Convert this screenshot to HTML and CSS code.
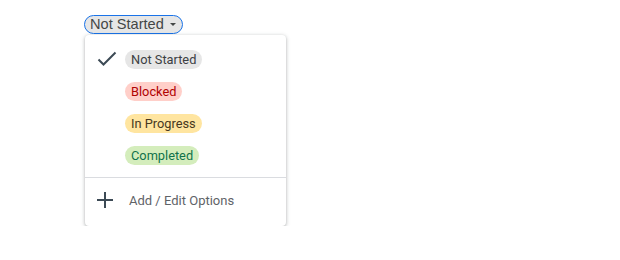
FILE: index.html
```html
<!DOCTYPE html>
<html>
<head>
<meta charset="utf-8">
<link rel="stylesheet" href="styles.css">
</head>
<body>
<div class="page">
  <div class="cell">
    <button class="trigger"><span class="trigger-label">Not Started</span><span class="caret"></span></button>
    <div class="menu">
      <ul class="options">
        <li class="option">
          <span class="icon">
            <svg width="20" height="16" viewBox="0 0 20 16"><path d="M1.5 8.5l5 5L18.5 1.5" fill="none" stroke="#3c4a55" stroke-width="2"/></svg>
          </span>
          <span class="chip chip-grey">Not Started</span>
        </li>
        <li class="option"><span class="icon"></span><span class="chip chip-red">Blocked</span></li>
        <li class="option"><span class="icon"></span><span class="chip chip-yellow">In Progress</span></li>
        <li class="option"><span class="icon"></span><span class="chip chip-green">Completed</span></li>
      </ul>
      <div class="divider"></div>
      <div class="add">
        <span class="icon">
          <svg width="18" height="16" viewBox="0 0 18 16"><path d="M8 0v16M0 8h16" fill="none" stroke="#3c4a55" stroke-width="2"/></svg>
        </span>
        <span class="add-label">Add / Edit Options</span>
      </div>
    </div>
  </div>
</div>
</body>
</html>
```
FILE: styles.css
```css
html, body {
  margin: 0;
  padding: 0;
  background: #ffffff;
}
.page {
  padding: 15px 0 0 84px;
}
.cell {
  display: flex;
  flex-direction: column;
  align-items: flex-start;
}
.trigger {
  display: flex;
  align-items: center;
  height: 19px;
  box-sizing: border-box;
  margin: 0;
  padding: 0 6px 0 5px;
  border: 1px solid #1a73e8;
  border-radius: 10px;
  background: #e6e6e6;
  font-family: "Liberation Sans", Arial, sans-serif;
  font-size: 14.6px;
  color: #444746;
  line-height: 17px;
}
.caret {
  margin-left: 6px;
  width: 0;
  height: 0;
  border-left: 3px solid transparent;
  border-right: 3px solid transparent;
  border-top: 3px solid #444746;
}
.menu {
  margin-top: 1px;
  margin-left: 1px;
  width: 201px;
  box-sizing: border-box;
  background: #fff;
  border-radius: 4px;
  box-shadow: 0 1px 3px rgba(60, 64, 67, 0.3), 0 1px 4px 1px rgba(60, 64, 67, 0.12);
  padding: 8px 0 6px;
  font-family: Roboto, "Liberation Sans", sans-serif;
}
.options {
  list-style: none;
  margin: 0;
  padding: 0;
}
.option {
  display: flex;
  align-items: center;
  height: 32px;
  padding-left: 12px;
}
.icon {
  display: flex;
  align-items: center;
  width: 28px;
  flex: none;
}
.chip {
  display: inline-block;
  height: 19px;
  line-height: 19px;
  padding: 0 6px;
  border-radius: 10px;
  font-size: 12.8px;
}
.chip-grey { background: #e6e6e6; color: #3c4043; }
.chip-red { background: #ffcfc9; color: #b10202; }
.chip-yellow { background: #ffe5a0; color: #473821; }
.chip-green { background: #d4edbc; color: #11734b; }
.divider {
  margin-top: 6px;
  height: 1px;
  background: #dadce0;
}
.add {
  display: flex;
  align-items: center;
  height: 40px;
  padding: 2px 0 0 12px;
}
.add-label {
  margin-left: 4px;
  font-size: 13px;
  color: #5f6368;
}
```
